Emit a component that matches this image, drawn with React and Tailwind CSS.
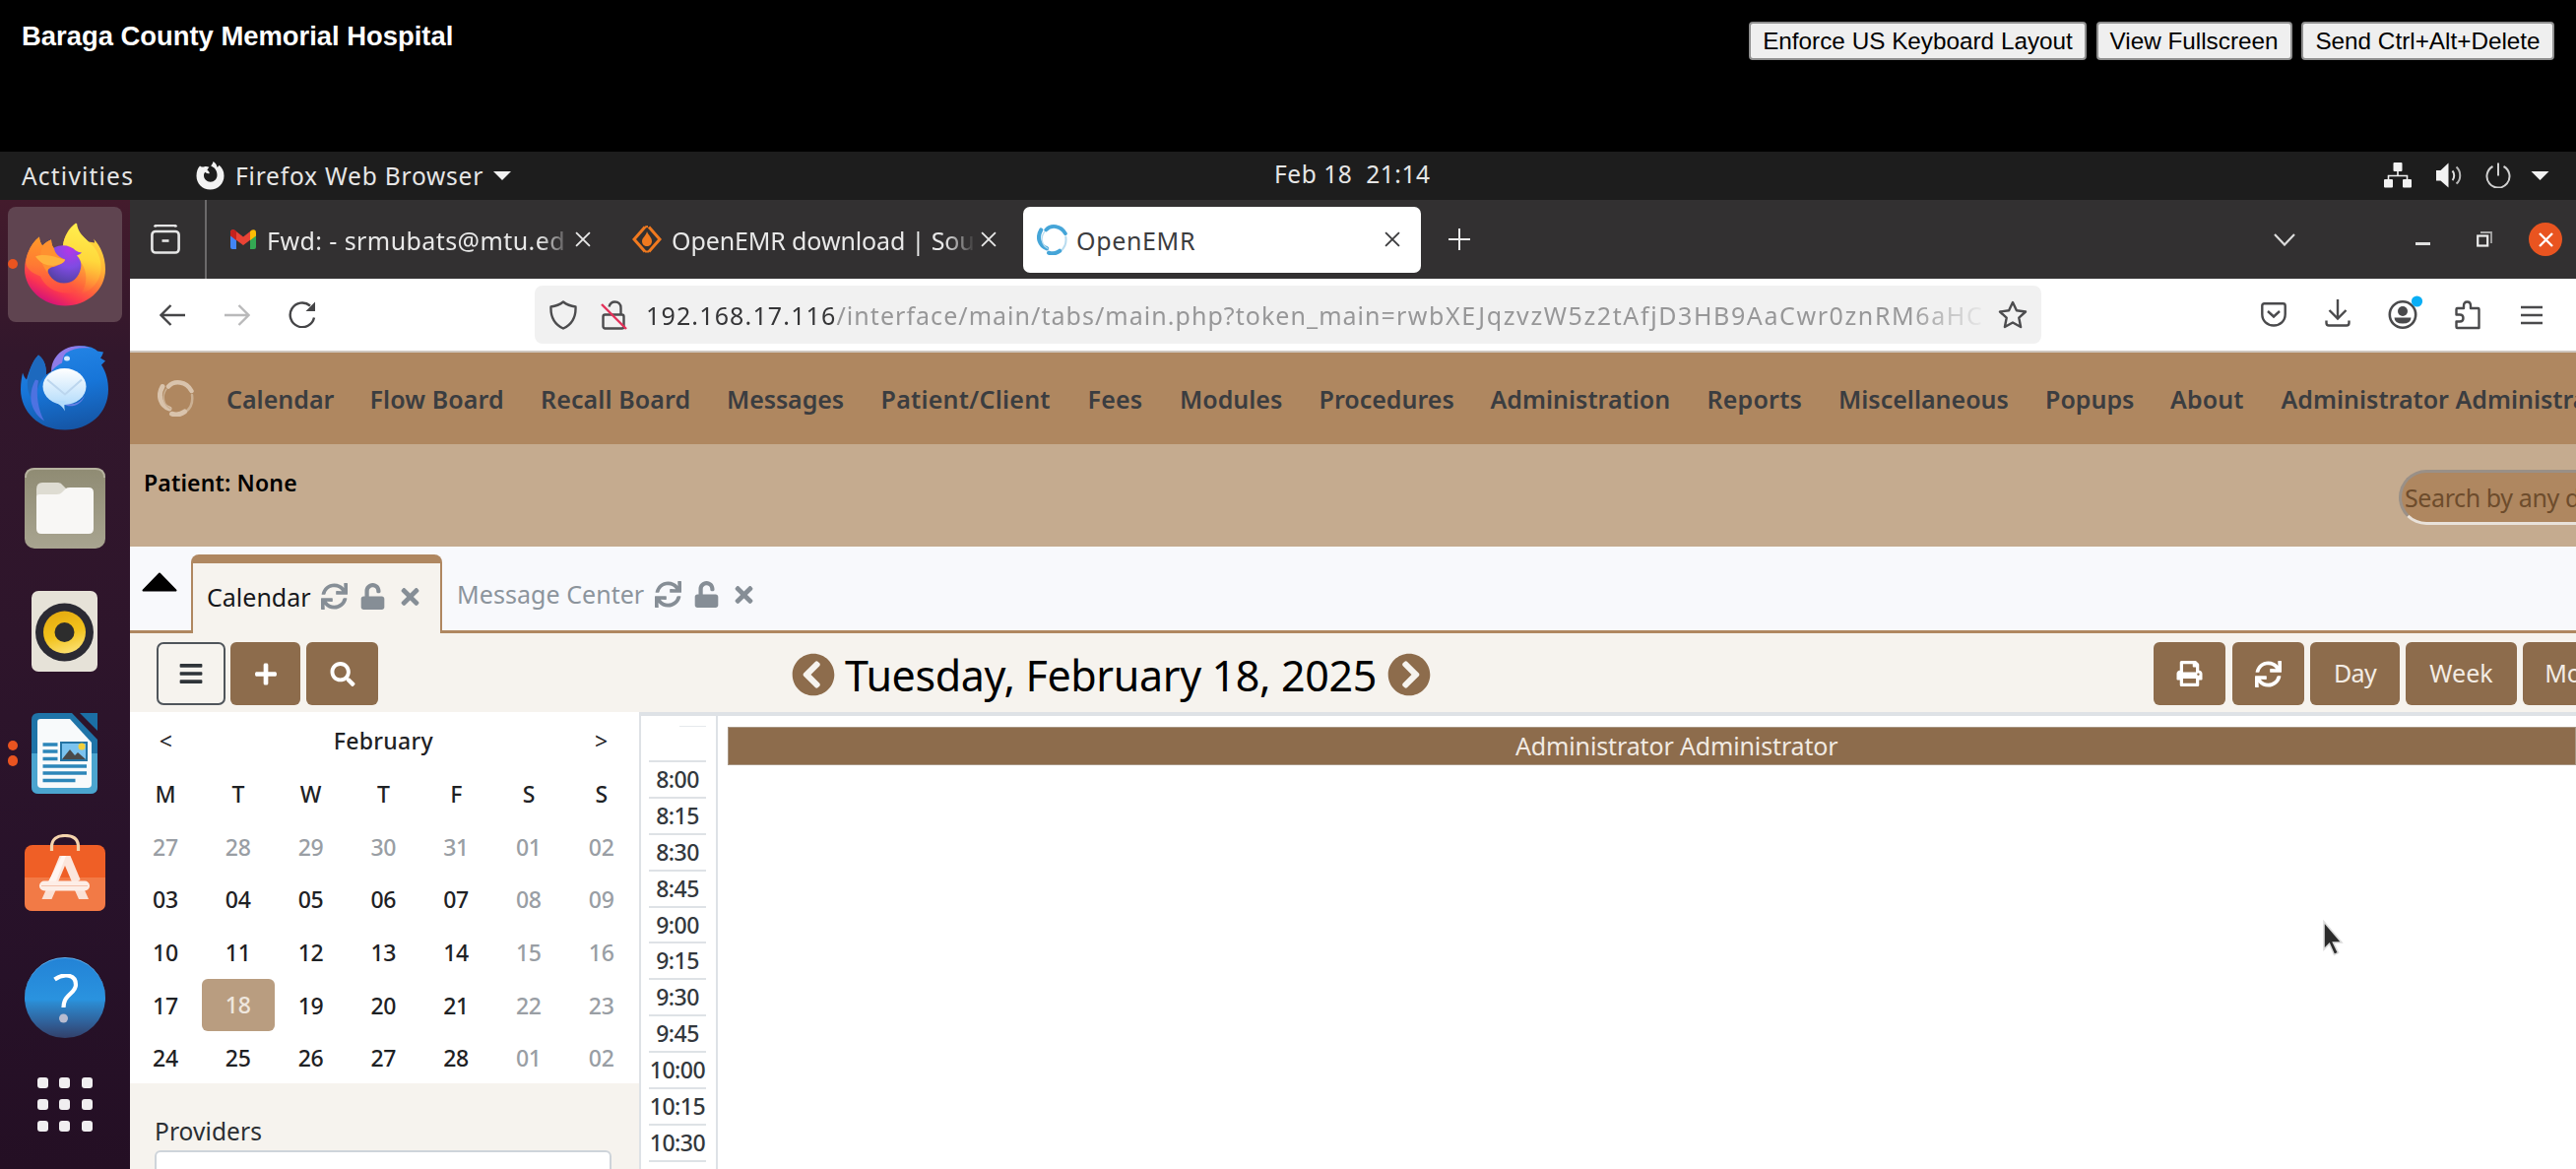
import React from "react";
import { FaSync, FaUnlock, FaTimes, FaBars, FaPlus, FaSearch, FaPrint, FaChevronCircleLeft, FaChevronCircleRight } from "react-icons/fa";

/* ---------- viewer header ---------- */

function RemoteButton({ className, children }) {
  return (
    <button className={`h-[39px] rounded-[4px] border-2 border-[#8f8f8f] bg-[#efefef] text-center font-['Liberation_Sans',sans-serif] text-[24.3px] leading-[33px] whitespace-nowrap text-black ${className}`}>
      {children}
    </button>
  );
}

function ViewerHeader() {
  return (
    <header className="flex h-[154px] items-start justify-between bg-black pr-[22px] pl-[22px]">
      <h1 className="mt-[18px] font-['Liberation_Sans',sans-serif] text-[27.4px] leading-[38px] font-bold text-white">
        Baraga County Memorial Hospital
      </h1>
      <div className="mt-[22px] flex gap-[9.5px]">
        <RemoteButton className="w-[343px]">Enforce US Keyboard Layout</RemoteButton>
        <RemoteButton className="w-[199px]">View Fullscreen</RemoteButton>
        <RemoteButton className="w-[257px]">Send Ctrl+Alt+Delete</RemoteButton>
      </div>
    </header>
  );
}

/* ---------- desktop top bar ---------- */

function CaretDown({ className }) {
  return (
    <svg viewBox="0 0 18 9" className={className}>
      <path d="M0 0h18l-9 9z" fill="#f2f2f2" />
    </svg>
  );
}

function TopBar() {
  return (
    <div className="flex h-[49px] items-center bg-[#1d1d1d] text-[24.5px] leading-[48px] text-[#e6e6e6]">
      <span className="w-[199px] pl-[22px] tracking-[1.2px]">Activities</span>
      <svg viewBox="0 0 29 29" className="h-[29px] w-[29px]">
        <path
          d="M4 4.500C2 6.500 .5 10 .5 14.500 .5 22.500 6.500 28.500 14.500 28.500s14-6 14-14c0-5-2-8.500-5-10.800-.7 1-1 1.800-2 2C21 3 19.500 1.200 17.500 0c-.2 2-1.500 3.200-2.300 4.600 3.800 1.500 6.300 4.600 6.300 9.100 0 4-3 7-6.700 7-3.800 0-6.800-2.800-6.800-6.700 0-1.200.5-2.500 1.300-3.200 1 1.100 2.700 1.700 4.500 1.200-.2-2-1.600-2.600-2.400-3.500.5-1 1.500-1.800 2-2.700C11.500 5 9.500 4.800 8 5.600 6.500 5.600 5 5.500 4 4.500z"
          fill="#f2f2f2"
        />
      </svg>
      <span className="ml-[11px] w-[262px] tracking-[0.8px]">Firefox Web Browser</span>
      <CaretDown className="h-[9px] w-[18px]" />
      <span className="ml-[775px] -mt-[3px] whitespace-pre tracking-[0.55px]">Feb 18  21:14</span>
      <div className="mr-[27px] ml-auto -mt-[2px] flex items-center">
        <svg viewBox="0 0 28 26" className="h-[26px] w-[28px]" fill="#f2f2f2">
          <rect x="9.500" y="0" width="9" height="9" rx="1" />
          <rect x="0" y="17" width="9" height="8.500" rx="1" />
          <rect x="19" y="17" width="9" height="8.500" rx="1" />
          <path d="M14 9v4.500M4.500 17v-3.500h19V17" fill="none" stroke="#f2f2f2" strokeWidth="1.600" />
        </svg>
        <svg viewBox="0 0 27 26" className="ml-[25px] h-[26px] w-[27px]">
          <path d="M0 8h4.500L12.500.5v25L4.500 18.500H0z" fill="#f2f2f2" />
          <path d="M16.500 8.500c2.300 2.500 2.300 7 0 9.500" fill="none" stroke="#e0e0e0" strokeWidth="2" />
          <path d="M20.500 4.500c5 4.500 5 13 0 17" fill="none" stroke="#b8b8b8" strokeWidth="2" />
        </svg>
        <svg viewBox="0 0 26 26" className="ml-[23px] h-[26px] w-[26px]" fill="none" stroke="#d0d0d0" strokeWidth="2">
          <path d="M7.500 4A11.500 11.500 0 1 0 18.500 4M13 .5v13" />
        </svg>
        <CaretDown className="ml-[20px] mt-[2px] h-[9px] w-[19px]" />
      </div>
    </div>
  );
}

/* ---------- dock ---------- */

function FirefoxLogo() {
  return (
    <svg viewBox="0 0 82 84" className="h-[85px] w-[82px]">
      <defs>
        <linearGradient id="ffBody" x1="0.8" y1="0.1" x2="0.35" y2="1">
          <stop offset="0" stopColor="#ffe141" />
          <stop offset="0.35" stopColor="#ffb236" />
          <stop offset="0.62" stopColor="#ff6a3a" />
          <stop offset="0.82" stopColor="#fb3550" />
          <stop offset="1" stopColor="#d3127a" />
        </linearGradient>
        <linearGradient id="ffFlame" x1="0.5" y1="0" x2="0.4" y2="1">
          <stop offset="0" stopColor="#fff04f" />
          <stop offset="0.5" stopColor="#ffd83c" />
          <stop offset="1" stopColor="#ff9a30" stopOpacity="0" />
        </linearGradient>
        <linearGradient id="ffHead" x1="0.3" y1="0" x2="0.2" y2="1">
          <stop offset="0" stopColor="#ff9a28" />
          <stop offset="0.5" stopColor="#ff7a33" />
          <stop offset="1" stopColor="#fe4148" />
        </linearGradient>
        <radialGradient id="ffGlobe" cx="0.65" cy="0.1" r="0.95">
          <stop offset="0" stopColor="#b436e8" />
          <stop offset="0.5" stopColor="#7f4be3" />
          <stop offset="1" stopColor="#51409f" />
        </radialGradient>
      </defs>
      <path d="M15 14c0 3 1 6 3 9 3-3 6-5 9-6 0 4 1 7 3 9l9-3C40 13 45 5 52 0c1 9 6 13 13 19l6 1c0-1 0-2-1-4 8 8 12 20 12 31C82 68 63 84 41 84S0 67 0 47c0-13 6-26 15-33z" fill="url(#ffBody)" />
      <path d="M53 0c1 9 6 13 12 19 10 8 14 19 12 32-2 9-9 18-20 21 7-9 7-22 1-31-5-8-16-9-19-18C40 13 46 5 53 0z" fill="url(#ffFlame)" />
      <path d="M15 14c0 3 1 6 3 9 3-3 6-5 9-6 0 4 1 7 3 9l8 9 4 24c3 6 8 9 12 10-16 6-33-2-38-15C6 50 2 46 1 40c2-11 6-20 14-26z" fill="url(#ffHead)" />
      <path d="M30 25c8-4 17-2 22 3 2 1 4 2 6 2-2 2-4 2-5 3 4 4 5 8 4 13-2 9-8 15-17 15-10 0-17-8-17-16 0-7 2-15 7-20z" fill="url(#ffGlobe)" />
      <path d="M27 17c0 4 1 7 3 9 1 5 4 8 11 11 0 3-5 5-10 7-5 1-7 2-8 6-6-8-8-15-6-23 2-4 6-8 10-10z" fill="#ff9130" />
      <path d="M11 34c7-3 16-1 22 1 4 1 6 2 8 2 0 3-5 5-10 6-7 1-14-1-20-9z" fill="#ffb23c" />
    </svg>
  );
}

function ThunderbirdLogo() {
  return (
    <svg viewBox="0 0 89 85" className="mt-[4px] h-[86px] w-[89px]">
      <defs>
        <linearGradient id="tbBody" x1="0.3" y1="0" x2="0.5" y2="1">
          <stop offset="0" stopColor="#2485e6" />
          <stop offset="0.5" stopColor="#1775d8" />
          <stop offset="1" stopColor="#1556a6" />
        </linearGradient>
        <linearGradient id="tbMail" x1="0.5" y1="0" x2="0.5" y2="1">
          <stop offset="0" stopColor="#ffffff" />
          <stop offset="1" stopColor="#b4dcfb" />
        </linearGradient>
      </defs>
      <path d="M18 9c7 5 8 13 8 20l6-4C34 12 42 1 58 0c10-1 17 2 20 5 2 0 4 1 6 1-1 3-2 5-3 6l5 3-4 4c5 8 7 16 7 25 0 24-19 41-44 41C18 85 0 66 0 44c0-7 1-12 2-17 1 3 2 5 4 7C9 24 12 15 18 9z" fill="url(#tbBody)" />
      <path d="M18 9c7 5 8 13 8 20-9 8-12 20-8 31C9 54 6 44 7 35 9 24 12 15 18 9z" fill="#1d69be" />
      <path d="M15 34c-8 15-6 32 9 42-6-11-9-26-6-41z" fill="#5b74e8" opacity="0.800" />
      <path d="M31 26c0-11 6-19 14-23 8-4 18-4 26-1-10-1-18 0-25 5-3 3-3 6-4 10-4 2-7 4-11 9z" fill="#8f7be8" />
      <path d="M65 50c-5 9-13 10-23 8 6 5 19 4 23-8z" fill="#7a86ee" opacity="0.800" />
      <ellipse cx="44.500" cy="41" rx="22" ry="18.500" fill="url(#tbMail)" />
      <path d="M30 55c6 2 11 4 15 11-1-4-1-8 1-10z" fill="#b4dcfb" />
      <path d="M27 34l18 15 17-15" fill="none" stroke="#bcd6ee" strokeWidth="2" />
      <ellipse cx="47" cy="12.500" rx="3" ry="2.500" fill="#d6ecff" />
    </svg>
  );
}

function FilesIcon() {
  return (
    <svg viewBox="0 0 82 82" className="h-[82px] w-[82px]">
      <defs>
        <linearGradient id="flBg" x1="0" y1="0" x2="0" y2="1">
          <stop offset="0" stopColor="#8f8b73" />
          <stop offset="1" stopColor="#a8a490" />
        </linearGradient>
      </defs>
      <rect width="82" height="82" rx="10" fill="url(#flBg)" />
      <path d="M1 10Q1 1 10 1h62q9 0 9 9" fill="none" stroke="#b6b29f" strokeWidth="2" />
      <path d="M12 22q0-7 6-7h16q3 0 5 3l4 4h20v12H12z" fill="#dedcd2" />
      <path d="M12 30q0-3 3-3h18q3 0 5-2l4-4q1-1 4-1h19q5 0 5 5v37q0 5-5 5H17q-5 0-5-5z" fill="#f8f7f5" />
    </svg>
  );
}

function RhythmboxIcon() {
  return (
    <svg viewBox="0 0 67 82" className="h-[82px] w-[67px]">
      <defs>
        <linearGradient id="rbY" x1="0.3" y1="0" x2="0.6" y2="1">
          <stop offset="0" stopColor="#e5ab10" />
          <stop offset="0.55" stopColor="#f2c21c" />
          <stop offset="1" stopColor="#fbe070" />
        </linearGradient>
      </defs>
      <rect width="67" height="82" rx="7" fill="#e6e2d8" />
      <circle cx="33.500" cy="42" r="29.500" fill="#2b2a33" />
      <circle cx="33.500" cy="42" r="21.500" fill="url(#rbY)" />
      <circle cx="33.500" cy="42" r="10" fill="#2d2d2d" />
    </svg>
  );
}

function WriterIcon() {
  return (
    <svg viewBox="0 0 67 82" className="h-[82px] w-[67px]">
      <path d="M7 0h34l26 27v48q0 7-7 7H7q-7 0-7-7V7q0-7 7-7z" fill="#1f74a8" />
      <path d="M0 41h67v34q0 7-7 7H7q-7 0-7-7z" fill="#4ba5cf" />
      <path d="M49 0h18v18z" fill="#1b6fa5" />
      <path d="M9 6h30l22 24v42q0 4-4 4H10q-4 0-4-4V9q0-3 3-3z" fill="#f8fafb" />
      <path d="M11.500 32h15M11.500 39h15M11.500 46.500h15M11.500 54h44.500M11.500 61h44.500M11.500 68.500h33" stroke="#2c86b9" strokeWidth="3.600" />
      <rect x="30" y="30" width="26" height="18" fill="#7cc3ef" stroke="#2574a4" strokeWidth="2" />
      <circle cx="51" cy="34" r="3.500" fill="#f4d03a" />
      <path d="M31 47l8-10 5 6 3-3 8 7z" fill="#4a4a4a" />
    </svg>
  );
}

function SoftwareIcon() {
  return (
    <svg viewBox="0 0 82 78" className="-mt-[7px] h-[78px] w-[82px]">
      <rect y="11" width="82" height="67" rx="8" fill="#ef5f26" />
      <path d="M0 44h82v26q0 8-8 8H8q-8 0-8-8z" fill="#f27a46" />
      <path d="M27.500 17V13C27.500 5 33 1.500 41 1.500S54.500 5 54.500 13v4" fill="none" stroke="#f4d3ac" strokeWidth="3.200" />
      <path d="M35.500 22h11l10 24-7 6-8.500-20-8.500 20-7-6z" fill="#fbe6dc" />
      <path d="M21.500 57h10l-4 9h-10zM51 57h10l4 9H55z" fill="#fbe1d5" />
      <path d="M38 22h4L31 50h-8z" fill="#fff6f1" />
      <rect x="15" y="47.500" width="51" height="10" rx="5" fill="#fdeee7" />
      <path d="M17 52.500h47" stroke="#f5c3ac" strokeWidth="1.200" />
    </svg>
  );
}

function HelpIcon() {
  return (
    <div className="flex h-[82px] w-[82px] items-center justify-center rounded-full border-t border-[#5fb0ee] bg-[linear-gradient(#2383d6_0%,#2a93df_52%,#2c8ad0_56%,#30619a_80%,#32406a_100%)]">
      <svg viewBox="0 0 26 50" className="ml-[3px] h-[50px] w-[26px]">
        <path d="M1.500 5.500C10-.5 23-.5 23 11c0 9-12.500 9-12.500 23" fill="none" stroke="#fff" strokeWidth="4.200" />
        <circle cx="10.500" cy="45" r="4.500" fill="#b8bcd0" />
      </svg>
    </div>
  );
}

function DockSlot({ children, dots = 0, active = false }) {
  return (
    <div className="flex h-[124.200px] w-full shrink-0 items-center pl-[7.500px]">
      <div className={active ? "flex h-[117px] w-[116.500px] items-center rounded-[8px] bg-[#5f4450]" : "flex h-[117px] w-[116.500px] items-center"}>
        <div className="flex w-[11px] shrink-0 flex-col gap-[5px]">
          {Array.from({ length: dots }, (_, i) => (
            <i key={i} className="block h-[10.500px] w-[10.500px] rounded-full bg-[#e95420]" />
          ))}
        </div>
        <div className="flex w-[94.500px] justify-center">{children}</div>
      </div>
    </div>
  );
}

function Dock() {
  return (
    <aside className="flex w-[132px] shrink-0 flex-col overflow-hidden bg-[linear-gradient(#431b2c_0%,#32172c_16%,#2e152b_45%,#28122a_70%,#240f24_100%)] pt-[3px]">
      <DockSlot active dots={1}><FirefoxLogo /></DockSlot>
      <DockSlot><ThunderbirdLogo /></DockSlot>
      <DockSlot><FilesIcon /></DockSlot>
      <DockSlot><RhythmboxIcon /></DockSlot>
      <DockSlot dots={2}><WriterIcon /></DockSlot>
      <DockSlot><SoftwareIcon /></DockSlot>
      <DockSlot><HelpIcon /></DockSlot>
      <div className="ml-[38px] mt-[19px] grid w-[56px] grid-cols-3 gap-[11px]">
        {Array.from({ length: 9 }, (_, i) => (
          <i key={i} className="block h-[11px] w-[11px] rounded-[3px] bg-[#f0eef0]" />
        ))}
      </div>
    </aside>
  );
}

/* ---------- Firefox chrome ---------- */

function Cross({ className }) {
  return (
    <svg viewBox="0 0 15 15" className={className} fill="none" stroke="currentColor" strokeWidth="1.700">
      <path d="M1 1l13 13M14 1L1 14" />
    </svg>
  );
}

function SwirlLogo({ className, color, soft }) {
  return (
    <svg viewBox="0 0 37 37" className={className} fill="none" strokeLinecap="round">
      <path d="M11 6.500C17 0 29 1 34.500 11" stroke={color} strokeWidth="4.500" />
      <path d="M35 15c1 7-1 13-6 17" stroke={soft} strokeWidth="2.500" />
      <path d="M27.500 32c-4 3-9 3.500-13 2.200" stroke={color} strokeWidth="5" />
      <path d="M12 29C3.500 26-.5 16 5 6.500" stroke={color} strokeWidth="5" />
      <path d="M9 9c-5 7-3 16 4 20" stroke={soft} strokeWidth="1.500" />
    </svg>
  );
}

function TabBar() {
  return (
    <div className="flex h-[80px] items-center bg-[#323031] text-[25px] leading-[40px] text-[#e8e8e8]">
      <div className="flex h-full w-[78px] items-center border-r-2 border-[#6c6a6b] pl-[21px]">
        <svg viewBox="0 0 30 30" className="h-[30px] w-[30px]" fill="none" stroke="#e6e6e6" strokeWidth="2.600">
          <path d="M4 2.500q.5-1.500 2-1.500h18q1.500 0 2 1.500" />
          <rect x="1.400" y="7" width="27.200" height="21.500" rx="3.500" />
          <path d="M11.500 16.500h7" />
        </svg>
      </div>
      <div className="flex w-[409px] items-center pl-[24px]">
        <svg viewBox="0 0 26 20" className="h-[20px] w-[26px]">
          <path d="M0 3v15q0 2 2 2h4V9z" fill="#4285f4" />
          <path d="M26 3v15q0 2-2 2h-4V9z" fill="#34a853" />
          <path d="M0 3.500Q0-.5 4 .5l9 7 9-7v8.800l-9 6.700-9-6.700z" fill="#ea4335" />
          <path d="M0 3.500Q0-.5 4 .5L6 2v9L0 6.500z" fill="#c5221f" />
          <path d="M26 3.500Q26-.5 22 .5L20 2v9l6-4.500z" fill="#fbbc04" />
        </svg>
        <span className="ml-[11px] w-[308px] whitespace-nowrap pt-[2px] tracking-[0.42px] [mask-image:linear-gradient(90deg,#000_90%,transparent_101%)]">
          Fwd: - srmubats@mtu.ed
        </span>
        <Cross className="ml-[5px] h-[16px] w-[16px]" />
      </div>
      <div className="flex w-[420px] items-center pl-[23px]">
        <svg viewBox="0 0 30 28" className="h-[28px] w-[30px]">
          <path d="M13 1.500L2 14l11 12.500M17 1.500L28 14 17 26.500" fill="none" stroke="#f0791f" strokeWidth="3" />
          <path d="M13 1.500l3-.5M13 26.500l4 0" stroke="#f0791f" strokeWidth="2" />
          <path d="M15 6c1.500 4 5 6 5 10 0 3-2.200 5-5 5s-5-2-5-5c0-4 4-5 5-10z" fill="#f0791f" />
        </svg>
        <span className="ml-[10px] w-[309px] whitespace-nowrap pt-[2px] tracking-[-0.12px] [mask-image:linear-gradient(90deg,#000_90%,transparent_100%)]">
          OpenEMR download | Sou
        </span>
        <Cross className="ml-[5px] h-[16px] w-[16px]" />
      </div>
      <div className="flex h-[67px] w-[404px] items-center rounded-[7px] bg-white pl-[14px] text-[#3c3c3e]">
        <SwirlLogo className="h-[31px] w-[31px]" color="#45a5d8" soft="#b9dcef" />
        <span className="ml-[9px] w-[313px] pt-[2px] tracking-[0.65px]">OpenEMR</span>
        <Cross className="h-[16px] w-[16px]" />
      </div>
      <svg viewBox="0 0 22 22" className="ml-[28px] h-[22px] w-[22px]" stroke="#ececec" strokeWidth="2">
        <path d="M0 11h22M11 0v22" />
      </svg>
      <svg viewBox="0 0 22 13" className="mr-[122px] ml-auto h-[13px] w-[22px]" fill="none" stroke="#dcdcdc" strokeWidth="2.200">
        <path d="M1 1l10 10.500L21 1" />
      </svg>
      <i className="mt-[9px] block h-[3px] w-[15px] bg-[#e0e0e0]" />
      <svg viewBox="0 0 16 16" className="ml-[47px] h-[16px] w-[16px]" fill="none">
        <rect x="1.200" y="4.500" width="10" height="10" stroke="#ececec" strokeWidth="2.200" />
        <path d="M4 1h11v11" stroke="#a8a8a8" strokeWidth="1.800" />
      </svg>
      <div className="mr-[14px] ml-[37px] flex h-[34px] w-[34px] items-center justify-center rounded-full bg-[#e95420]">
        <svg viewBox="0 0 15 15" className="h-[15px] w-[15px]" stroke="#fff" strokeWidth="2.400">
          <path d="M1 1l13 13M14 1L1 14" />
        </svg>
      </div>
    </div>
  );
}

function NavBar() {
  return (
    <div className="flex h-[75px] items-center border-b-2 border-[#cfc7bf] bg-white text-[25px]">
      <svg viewBox="0 0 26 22" className="ml-[30px] h-[22px] w-[26px]" fill="none" stroke="#454547" strokeWidth="2.400">
        <path d="M26 11H1.500M11.500 1l-10 10 10 10" />
      </svg>
      <svg viewBox="0 0 26 22" className="ml-[40px] h-[22px] w-[26px]" fill="none" stroke="#b9b9ba" strokeWidth="2.400">
        <path d="M0 11h24.500M14.500 1l10 10-10 10" />
      </svg>
      <svg viewBox="0 0 28 27" className="ml-[39px] h-[27px] w-[28px]">
        <path d="M26 16.500A12.300 12.300 0 1 1 22 4.500" fill="none" stroke="#454547" strokeWidth="2.400" />
        <path d="M27 .5v9.500h-9.500z" fill="#454547" />
      </svg>
      <div className="ml-[222px] flex h-[59px] w-[1530px] items-center rounded-[8px] bg-[#f1f1f1] pl-[15px]">
        <svg viewBox="0 0 28 30" className="h-[30px] w-[28px]" fill="none" stroke="#4c4c4e" strokeWidth="2.400" strokeLinejoin="round">
          <path d="M14 1.500c3.500 2.800 7.500 4.300 12.500 5C27 17 22.500 24.500 14 28.500 5.500 24.500 1 17 1.500 6.500 6.500 5.800 10.500 4.300 14 1.500z" />
        </svg>
        <svg viewBox="0 0 27 30" className="ml-[24px] h-[30px] w-[27px]" fill="none">
          <rect x="2.500" y="14.500" width="21" height="14" rx="2" stroke="#4c4c4e" strokeWidth="2.400" />
          <path d="M8.500 6.500C9.500 3 12 1.500 14.500 1.500c3.500 0 6 2.500 6 6v7" stroke="#4c4c4e" strokeWidth="2.400" />
          <path d="M1 4l25 25" stroke="#e4315a" strokeWidth="2.400" />
        </svg>
        <div className="ml-[19px] w-[1364px] shrink-0 pt-px leading-[40px] whitespace-nowrap text-[#979798] [mask-image:linear-gradient(90deg,#000_94%,transparent_100%)]">
          <span className="tracking-[1.15px] text-[#353537]">192.168.17.116</span>
          <span className="tracking-[1.04px]">/interface/main/tabs/main.php?token_main=</span>
          <span className="tracking-[1.6px]">rwbXEJqzvzW5z2tAfjD3HB9AaCwr0znRM6aHC</span>
        </div>
        <svg viewBox="0 0 30 29" className="ml-[9px] h-[29px] w-[30px] shrink-0" fill="none" stroke="#4c4c4e" strokeWidth="2.400" strokeLinejoin="round">
          <path d="M15 2l3.900 8.300 9.100 1.200-6.700 6.200 1.800 9.300L15 22.500 6.900 27l1.800-9.300L2 11.500l9.100-1.200z" />
        </svg>
      </div>
      <div className="mr-[34px] ml-auto flex items-center text-[#4a4a4c]">
        <svg viewBox="0 0 26 25" className="h-[25px] w-[26px]" fill="none" stroke="currentColor" strokeWidth="2.400">
          <path d="M3.500 1.300h19q2.200 0 2.200 2.200V12c0 7-5.200 11.500-11.700 11.500S1.300 19 1.300 12V3.500q0-2.200 2.200-2.200zM7 9l6 5.500L19 9" />
        </svg>
        <svg viewBox="0 0 26 28" className="-mt-[3px] ml-[39px] h-[28px] w-[26px]" fill="none" stroke="currentColor" strokeWidth="2.400">
          <path d="M13 0v19M4.500 11l8.500 8.500L21.500 11M1.500 21.500v2.500q0 2.500 2.500 2.500h18q2.500 0 2.500-2.500v-2.500" />
        </svg>
        <svg viewBox="0 0 36 36" className="-mt-[5px] ml-[38px] h-[36px] w-[36px]">
          <circle cx="15" cy="20.500" r="13.200" fill="none" stroke="currentColor" strokeWidth="2.600" />
          <circle cx="15" cy="17" r="5" fill="currentColor" />
          <path d="M6.500 23.500h17q0 6-8.500 6t-8.500-6z" fill="currentColor" />
          <circle cx="29.500" cy="7" r="5.600" fill="#09aef5" />
        </svg>
        <svg viewBox="0 0 26 30" className="ml-[32px] h-[30px] w-[26px]" fill="none" stroke="currentColor" strokeWidth="2.400" strokeLinejoin="round">
          <path d="M1.500 14.500V9q0-1 1-1H9V5.500q0-4 3.500-4T16 5.500V8h7.500q1 0 1 1v19H2.500q-1 0-1-1v-5.500H5q3.500 0 3.500-3.500T5 14.500z" />
        </svg>
        <svg viewBox="0 0 22 20" className="ml-[41px] h-[20px] w-[22px]" stroke="currentColor" strokeWidth="2.400">
          <path d="M0 2h22M0 10h22M0 18h22" />
        </svg>
      </div>
    </div>
  );
}

/* ---------- OpenEMR page ---------- */

function MainMenu() {
  return (
    <nav className="flex h-[93px] items-center overflow-hidden bg-[#af8760] pl-[28px] text-[25px] leading-[40px] font-semibold whitespace-nowrap text-[#3b3d40]">
      <SwirlLogo className="h-[37px] w-[37px] shrink-0" color="#d9c3ac" soft="#cbb093" />
      <span className="ml-[33px] w-[145.500px] shrink-0">Calendar</span>
      <span className="w-[173.500px] shrink-0 tracking-[0.1px]">Flow Board</span>
      <span className="w-[189px] shrink-0 tracking-[0.1px]">Recall Board</span>
      <span className="w-[156.500px] shrink-0 tracking-[-0.1px]">Messages</span>
      <span className="w-[210px] shrink-0 tracking-[0.25px]">Patient/Client</span>
      <span className="w-[93.500px] shrink-0 tracking-[0.2px]">Fees</span>
      <span className="w-[141.500px] shrink-0">Modules</span>
      <span className="w-[174px] shrink-0">Procedures</span>
      <span className="w-[220px] shrink-0">Administration</span>
      <span className="w-[133.500px] shrink-0 tracking-[0.2px]">Reports</span>
      <span className="w-[210px] shrink-0">Miscellaneous</span>
      <span className="w-[127px] shrink-0">Popups</span>
      <span className="w-[112.500px] shrink-0 tracking-[0.1px]">About</span>
      <span className="shrink-0">Administrator Administrator</span>
    </nav>
  );
}

function PatientBar() {
  return (
    <div className="flex h-[104px] items-start justify-between overflow-hidden bg-[#c5ab8f] pl-[14px]">
      <span className="mt-[19px] text-[23px] leading-[40px] font-semibold tracking-[0.15px] text-black">Patient: None</span>
      <div className="mt-[26px] -mr-[120px] h-[56px] w-[300px] shrink-0 overflow-hidden rounded-[28px] border-[3.500px] border-t-[#9a9087] border-r-[#e9e2da] border-b-[#e9e2da] border-l-[#9a9087] bg-[#af8760] pl-[3px] text-[25px] leading-[50px] tracking-[-0.4px] whitespace-nowrap text-[#6d4c2c]">
        Search by any demographics
      </div>
    </div>
  );
}

function TabIcons() {
  return (
    <span className="flex items-center text-[#868e96]">
      <FaSync className="h-[27px] w-[27px]" />
      <FaUnlock className="ml-[13px] h-[27px] w-[25px]" />
      <FaTimes className="ml-[14px] h-[26px] w-[23px]" />
    </span>
  );
}

function PageTabs() {
  return (
    <div className="flex h-[88px] bg-[#f8f9fc] text-[25px] leading-[40px]">
      <div className="w-[62px] border-b-[3px] border-[#af8760] pt-[26px] pl-[12px]">
        <svg viewBox="0 0 36 20" className="h-[20px] w-[36px]">
          <path d="M18 1.500L34.500 18.500h-33z" stroke="#000" strokeWidth="2" strokeLinejoin="round" />
        </svg>
      </div>
      <div className="mt-[8px] flex w-[255px] items-start rounded-t-[8px] border-x-2 border-t-[9px] border-[#af8760] bg-[#f6f3ee] pt-[14px] pl-[14px]">
        <span className="w-[115.500px] text-[#16181b]">Calendar</span>
        <div className="mt-[6px]"><TabIcons /></div>
      </div>
      <div className="flex flex-1 items-start border-b-[3px] border-[#af8760] pt-[28px] pl-[15px]">
        <span className="w-[201px] tracking-[0.05px] text-[#8c949c]">Message Center</span>
        <div className="mt-[7px]"><TabIcons /></div>
      </div>
    </div>
  );
}

function BrownButton({ className, children }) {
  return (
    <button className={`flex h-[64px] shrink-0 items-center justify-center rounded-[6px] bg-[#8d6c4c] text-[25px] text-[#f3ece4] ${className}`}>
      {children}
    </button>
  );
}

function CalendarToolbar() {
  return (
    <div className="flex h-[80px] items-start overflow-hidden bg-[#f6f3ee] pt-[9px] pl-[27px]">
      <button className="flex h-[64px] w-[70px] shrink-0 items-center justify-center rounded-[7px] border-2 border-[#4f555b] text-[#2f3439]">
        <FaBars className="h-[26px] w-[24px]" />
      </button>
      <BrownButton className="ml-[5px] w-[71px]"><FaPlus className="h-[25px] w-[24px] text-white" /></BrownButton>
      <BrownButton className="ml-[6px] w-[73px]"><FaSearch className="h-[25px] w-[26px] text-white" /></BrownButton>
      <div className="ml-[420px] flex h-[64px] w-[650px] shrink-0 items-center">
        <FaChevronCircleLeft className="mt-[2px] h-[44px] w-[44px]  text-[#8d6c4c]" />
        <h2 className="ml-[10px] w-[551px] pt-[3px] text-[43px] leading-[60px] tracking-[-0.36px] whitespace-nowrap text-black">
          Tuesday, February 18, 2025
        </h2>
        <FaChevronCircleRight className="mt-[2px] h-[44px] w-[44px] text-[#8d6c4c]" />
      </div>
      <BrownButton className="ml-[733px] w-[73px]"><FaPrint className="h-[26px] w-[27px] text-white" /></BrownButton>
      <BrownButton className="ml-[7px] w-[73px]"><FaSync className="h-[27px] w-[27px] text-white" /></BrownButton>
      <BrownButton className="ml-[6px] w-[91px] tracking-[-0.7px]">Day</BrownButton>
      <BrownButton className="ml-[6px] w-[113px]">Week</BrownButton>
      <BrownButton className="ml-[6px] w-[122px]">Month</BrownButton>
    </div>
  );
}

const WEEKS = [
  ["27", "28", "29", "30", "31", "01", "02"],
  ["03", "04", "05", "06", "07", "08", "09"],
  ["10", "11", "12", "13", "14", "15", "16"],
  ["17", "18", "19", "20", "21", "22", "23"],
  ["24", "25", "26", "27", "28", "01", "02"],
];

function dayClass(week, col, day) {
  if (day === "18") return "h-[53px] rounded-[6px] bg-[#b99d80] leading-[53px] text-[#efe7de]";
  if (week === 0 || col > 4) return "text-[#999ea4]";
  return "text-[#1e2124]";
}

function MiniCalendar() {
  return (
    <div className="h-[377px] bg-white pr-[1px] pt-px text-[23px] leading-[54px] text-[#1e2124]">
      <div className="grid h-[54px] grid-cols-[72.800px_369px_73.800px] pt-px text-center">
        <span>&lt;</span>
        <span className="font-medium tracking-[0.3px]">February</span>
        <span>&gt;</span>
      </div>
      <div className="-ml-px grid auto-rows-[53.700px] grid-cols-[repeat(7,73.800px)] pt-px text-center font-medium tracking-[-0.3px]">
        {["M", "T", "W", "T", "F", "S", "S"].map((d, i) => (
          <span key={i}>{d}</span>
        ))}
        {WEEKS.map((w, r) =>
          w.map((d, c) => (
            <span key={`${r}-${c}`} className={dayClass(r, c, d)}>{d}</span>
          ))
        )}
      </div>
    </div>
  );
}

const SLOTS = ["8:00", "8:15", "8:30", "8:45", "9:00", "9:15", "9:30", "9:45", "10:00", "10:15", "10:30"];

function DaySchedule() {
  return (
    <div className="flex flex-1 overflow-hidden border-t-4 border-[#dee2e6] bg-white">
      <div className="w-[80px] shrink-0 border-x-2 border-[#dee2e6] pr-[10px] pl-[8px]">
        <div className="flex h-[47px] items-start justify-end border-b-2 border-[#dee2e6] pt-[10px]">
          <i className="block h-px w-[27px] bg-[#e6e9ec]" />
        </div>
        {SLOTS.map((s) => (
          <div key={s} className="h-[36.900px] border-b-2 border-[#dee2e6] text-center text-[23px] leading-[35px] font-medium tracking-[-0.5px] whitespace-nowrap text-[#33383d]">
            {s}
          </div>
        ))}
      </div>
      <div className="flex-1 pt-[11px] pl-[10px]">
        <div className="h-[39px] border border-[#a89683] bg-[#8d6c4c] pl-[799px] text-[25px] leading-[37px] tracking-[-0.14px] text-[#f1eae2]">
          Administrator Administrator
        </div>
      </div>
    </div>
  );
}

function Pointer() {
  return (
    <svg viewBox="0 0 26 40" className="absolute top-[933px] left-[2357px] h-[40px] w-[26px]">
      <path d="M3 3v28l5.500-5.500 5 11 4-2-5-10.500H21z" fill="#2b2b2b" stroke="#dcdcdc" strokeWidth="1.600" />
    </svg>
  );
}

export default function App() {
  return (
    <div className="relative flex h-[1187px] w-[2616px] flex-col overflow-hidden bg-black font-['Noto_Sans',sans-serif]">
      <ViewerHeader />
      <TopBar />
      <div className="flex min-h-0 flex-1">
        <Dock />
        <main className="flex min-w-0 flex-1 flex-col">
          <TabBar />
          <NavBar />
          <MainMenu />
          <PatientBar />
          <PageTabs />
          <CalendarToolbar />
          <div className="flex min-h-0 flex-1 overflow-hidden">
            <section className="w-[517px] shrink-0 bg-[#f6f3ee]">
              <MiniCalendar />
              <div className="pt-[29px] pr-[28px] pl-[25px]">
                <label className="block text-[24.500px] leading-[39px] tracking-[0.08px] text-[#2a2e32]">Providers</label>
                <div className="h-[60px] rounded-[6px] border-2 border-[#ced4da] bg-white" />
              </div>
            </section>
            <DaySchedule />
          </div>
        </main>
      </div>
      <Pointer />
    </div>
  );
}
